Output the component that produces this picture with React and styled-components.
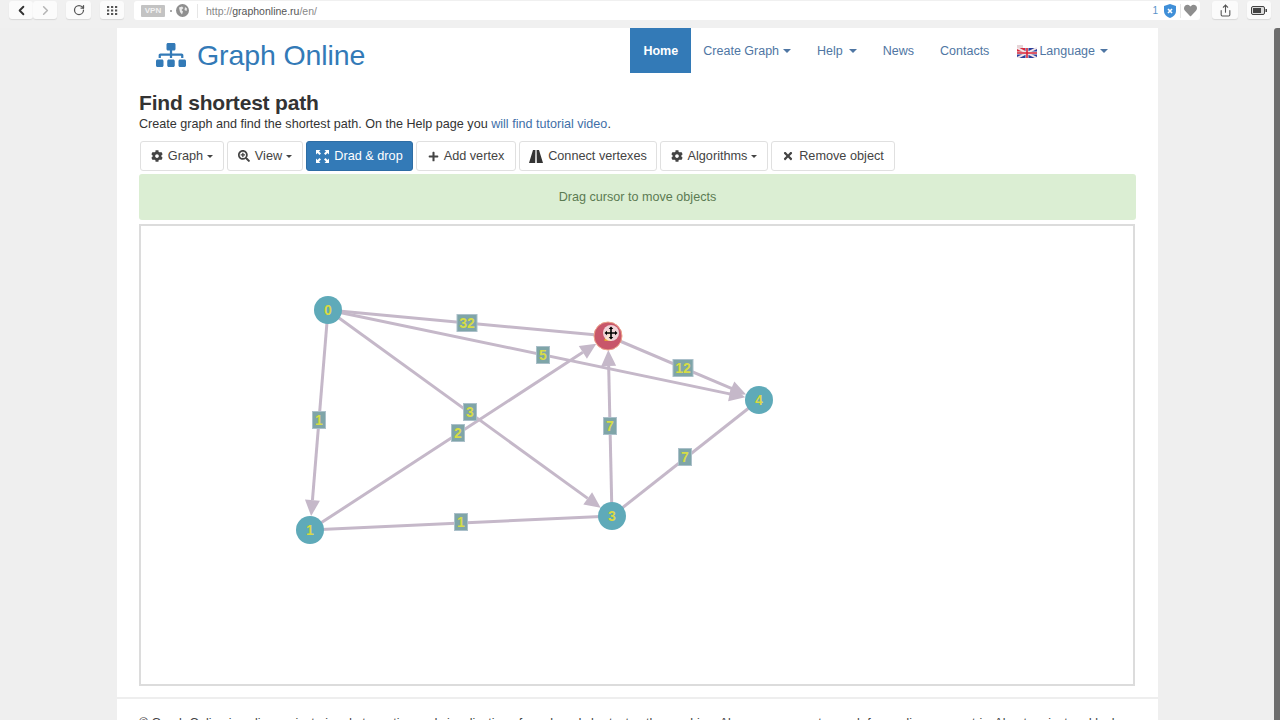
import React from "react";
import styled, { createGlobalStyle } from "styled-components";
import { FaCog, FaSearchPlus, FaPlus, FaTimes, FaSitemap, FaHeart } from "react-icons/fa";
import { ChevronLeft, ChevronRight, RotateCw, Share } from "lucide-react";

const GlobalStyle = createGlobalStyle`
  html, body {
    margin: 0;
    height: 720px;
    overflow: hidden;
    background: #efefef;
    font-family: "Liberation Sans", Arial, sans-serif;
    color: #333;
  }
`;

const BrowserBar = styled.div`
  display: flex;
  align-items: flex-start;
  height: 28px;
  padding: 1px 9px 0;
  box-sizing: border-box;
  background: #f0f0f0;
`;

const ChromeButton = styled.div`
  display: flex;
  align-items: center;
  justify-content: center;
  width: ${(p) => p.$w || 24}px;
  height: 18px;
  margin-right: ${(p) => p.$gap || 0}px;
  background: #fbfbfb;
  border-radius: 3px;
  box-shadow: 0 1px 1px #d8d8d8;
  color: ${(p) => p.$color || "#555"};
`;

const UrlField = styled.div`
  flex: 1;
  display: flex;
  align-items: center;
  height: 19px;
  margin: 0 12px 0 10px;
  padding: 0 3px 0 7px;
  background: #fff;
  border-radius: 3px;
  font-size: 10.5px;
  color: #888;
`;

const VpnBadge = styled.span`
  width: 24px;
  height: 12px;
  background: #c3c3c3;
  color: #f2f2f2;
  border-radius: 1px;
  font-size: 8px;
  font-weight: bold;
  line-height: 12px;
  text-align: center;
`;

const Dot = styled.span`
  width: 2px;
  height: 2px;
  margin: 0 4px 0 5px;
  background: #aaa;
`;

const Separator = styled.span`
  width: 1px;
  height: 14px;
  margin: ${(p) => p.$margin};
  background: #e6e6e6;
`;

const Host = styled.span`
  color: #555;
`;

const BlockCount = styled.span`
  margin-left: auto;
  margin-right: 6px;
  color: #5a93c9;
  font-size: 10px;
`;

const Page = styled.div`
  width: 1041px;
  height: 692px;
  margin-left: 117px;
  background: #fff;
  overflow: hidden;
`;

const Header = styled.header`
  display: flex;
  justify-content: space-between;
  height: 45px;
  padding: 0 37px 0 39px;
`;

const Brand = styled.a`
  display: flex;
  align-items: center;
  gap: 11px;
  height: 54px;
  color: #337ab7;
  font-size: 28.5px;
  letter-spacing: -0.1px;
`;

const Nav = styled.nav`
  display: flex;
`;

const NavItem = styled.a`
  display: flex;
  align-items: center;
  padding: 0 13px 0 ${(p) => p.$left || 13}px;
  height: 45px;
  box-sizing: border-box;
  font-size: 12.5px;
  color: #4f76a3;
`;

const ActiveNavItem = styled(NavItem)`
  justify-content: center;
  width: 61px;
  padding: 0;
  color: #fff;
  background: #337ab7;
  font-weight: bold;
`;

const Caret = styled.span`
  width: 0;
  height: 0;
  margin-left: ${(p) => p.$gap}px;
  border-top: ${(p) => p.$size}px solid currentColor;
  border-left: ${(p) => p.$size}px solid transparent;
  border-right: ${(p) => p.$size}px solid transparent;
`;

const Flag = styled.svg`
  width: 20px;
  height: 13px;
  margin: 2px 2px 0 2px;
`;

const Content = styled.main`
  padding: 0 22px 0 22px;
`;

const Title = styled.h1`
  margin: 18px 0 0;
  font-size: 21px;
  line-height: 24px;
  font-weight: bold;
  letter-spacing: -0.2px;
  color: #333;
`;

const Lead = styled.p`
  margin: 1px 0 0;
  font-size: 12.6px;
  line-height: 16px;
  color: #333;
`;

const LeadLink = styled.a`
  color: #3f6fa8;
`;

const Toolbar = styled.div`
  display: flex;
  gap: 3px;
  margin: 9px 0 3px 1px;
`;

const ToolButton = styled.button`
  display: flex;
  align-items: center;
  justify-content: center;
  gap: 5px;
  width: ${(p) => p.$w}px;
  height: 30px;
  padding: 0;
  box-sizing: border-box;
  font-family: inherit;
  font-size: 12.7px;
  color: ${(p) => (p.$active ? "#fff" : "#444")};
  background: ${(p) => (p.$active ? "#337ab7" : "#fff")};
  border: 1px solid ${(p) => (p.$active ? "#2e6da4" : "#e0e0e0")};
  border-radius: 3px;
  svg {
    flex: none;
  }
`;

const Alert = styled.div`
  display: flex;
  align-items: center;
  justify-content: center;
  height: 46px;
  background: #dbeed3;
  border-radius: 3px;
  font-size: 12.6px;
  color: #5b7b52;
`;

const Canvas = styled.div`
  width: 996px;
  height: 462px;
  margin-top: 4px;
  box-sizing: border-box;
  border: 2px solid #dcdcdc;
`;

const GraphSvg = styled.svg`
  display: block;
  width: 100%;
  height: 100%;
  font-family: "Liberation Sans", Arial, sans-serif;
  font-weight: bold;
  text-anchor: middle;
`;

const Rule = styled.hr`
  height: 2px;
  margin: 11px 0 0;
  border: 0;
  background: #eeeeee;
`;

const Footer = styled.footer`
  padding: 15px 22px 0;
  font-size: 12.4px;
  line-height: 18px;
  white-space: nowrap;
  color: #444;
`;

const Scrollbar = styled.div`
  position: absolute;
  top: 28px;
  right: 0;
  width: 6px;
  height: 692px;
  background: #6d6d6d;
  border-radius: 3px 0 0 0;
`;

const LINE = "#c5b8c9";

const nodes = [
  { id: 0, x: 328, y: 310 },
  { id: 1, x: 310, y: 530 },
  { id: 2, x: 608, y: 336, active: true },
  { id: 3, x: 612, y: 516 },
  { id: 4, x: 759, y: 400 },
];

const edges = [
  { from: 0, to: 2, label: "32", lx: 467, ly: 323 },
  { from: 0, to: 4, label: "5", lx: 543, ly: 355, arrow: true },
  { from: 0, to: 1, label: "1", lx: 319, ly: 420, arrow: true },
  { from: 0, to: 3, label: "3", lx: 470, ly: 412, arrow: true },
  { from: 1, to: 2, label: "2", lx: 458, ly: 433, arrow: true },
  { from: 3, to: 2, label: "7", lx: 610, ly: 426, arrow: true },
  { from: 2, to: 4, label: "12", lx: 683, ly: 368, arrow: true },
  { from: 1, to: 3, label: "1", lx: 461, ly: 522 },
  { from: 3, to: 4, label: "7", lx: 685, ly: 457 },
];

const NODE_R = 14;

function Edge({ edge }) {
  const a = nodes[edge.from];
  const b = nodes[edge.to];
  const len = Math.hypot(b.x - a.x, b.y - a.y);
  const ux = (b.x - a.x) / len;
  const uy = (b.y - a.y) / len;
  const tipX = b.x - ux * NODE_R;
  const tipY = b.y - uy * NODE_R;
  const baseX = tipX - ux * 16;
  const baseY = tipY - uy * 16;
  const head = `${tipX},${tipY} ${baseX - uy * 7.5},${baseY + ux * 7.5} ${baseX + uy * 7.5},${baseY - ux * 7.5}`;
  return (
    <g>
      <line x1={a.x} y1={a.y} x2={edge.arrow ? baseX : b.x} y2={edge.arrow ? baseY : b.y} stroke={LINE} strokeWidth="3" />
      {edge.arrow && <polygon points={head} fill={LINE} />}
    </g>
  );
}

function EdgeLabel({ edge }) {
  const w = edge.label.length > 1 ? 20 : 13;
  return (
    <g>
      <rect x={edge.lx - w / 2} y={edge.ly - 8.5} width={w} height="17" fill="#7fa5a8" stroke="#abc0ca" strokeWidth="1" />
      <text x={edge.lx} y={edge.ly + 5} fontSize="14" fill="#d6dc45">{edge.label}</text>
    </g>
  );
}

function Node({ node }) {
  return (
    <g>
      <circle
        cx={node.x}
        cy={node.y}
        r={NODE_R}
        fill={node.active ? "#c8566a" : "#5faab9"}
        stroke={node.active ? "#eda58a" : "none"}
        strokeWidth="1"
      />
      <text x={node.x} y={node.y + 5} fontSize="14" fill={node.active ? "#eca13a" : "#d9d944"}>{node.id}</text>
    </g>
  );
}

// the move cursor sits on the selected vertex
function MoveCursor({ x, y }) {
  return (
    <g transform={`translate(${x} ${y})`} strokeLinejoin="round">
      <circle r="8" fill="#fff" opacity="0.75" />
      <path
        d="M0-6.5 2.3-4H.8V-.8H4V-2.3L6.5 0 4 2.3V.8H.8V4H2.3L0 6.5-2.3 4H-.8V.8H-4V2.3L-6.5 0-4-2.3V-.8H-.8V-4H-2.3Z"
        fill="#000"
      />
    </g>
  );
}

function FullscreenIcon() {
  return (
    <svg width="13" height="13" viewBox="0 0 13 13" fill="currentColor">
      <path d="M0 0h4.5L3 1.5 5 3.500 3.500 5 1.500 3 0 4.500zM13 0v4.500L11.500 3 9.500 5 8 3.500 10 1.500 8.500 0zM0 13V8.500L1.500 10 3.500 8 5 9.500 3 11.500 4.500 13zM13 13H8.500L10 11.500 8 9.500 9.500 8 11.500 10 13 8.500z" />
    </svg>
  );
}

function RoadIcon() {
  return (
    <svg width="14" height="13" viewBox="0 0 14 13" fill="#333">
      <path d="M4 0H6.400L6.200 13H0ZM7.600 0H10L14 13H7.800Z" />
    </svg>
  );
}

function GridIcon() {
  return (
    <svg width="11" height="9" viewBox="0 0 11 9" fill="#555">
      {[0, 4, 8].map((x) => [0, 3.5, 7].map((y) => <rect key={`${x}-${y}`} x={x} y={y} width="2.200" height="2" />))}
    </svg>
  );
}

function GlobeIcon() {
  return (
    <svg width="13" height="13" viewBox="0 0 13 13">
      <circle cx="6.500" cy="6.500" r="6.500" fill="#8f8f8f" />
      <path d="M3 3.500 6 2.500 7.500 4 5.500 6 7 7.500 6 10.500 4 8zM9 3l2 1.500L10.500 7 8.500 6z" fill="#e9e9e9" />
    </svg>
  );
}

function ShieldIcon() {
  return (
    <svg width="12" height="14" viewBox="0 0 12 14">
      <path d="M6 0 12 2V7C12 10.500 9 13 6 14 3 13 0 10.500 0 7V2Z" fill="#3f8fd8" />
      <path d="M4 5 8 9M8 5 4 9" stroke="#fff" strokeWidth="1.600" />
    </svg>
  );
}

function BatteryIcon() {
  return (
    <svg width="16" height="9" viewBox="0 0 16 9">
      <rect x="0.500" y="0.500" width="13" height="8" rx="1.500" fill="#ddd" stroke="#444" />
      <rect x="2" y="2" width="8" height="5" fill="#444" />
      <rect x="14.500" y="3" width="1.500" height="3" fill="#444" />
    </svg>
  );
}

function UkFlag() {
  return (
    <Flag viewBox="0 0 20 13">
      <rect y="3" width="20" height="10" fill="#2b3f9c" />
      <rect y="3" width="8" height="5" fill="#d8283c" />
      <path d="M0 3 20 13M20 3 0 13" stroke="#f3e6e8" strokeWidth="2" />
      <path d="M10 3V13M0 8H20" stroke="#e8e8e8" strokeWidth="3" />
      <path d="M10 3V13M0 8H20" stroke="#d8243a" strokeWidth="1.600" />
      <rect width="6" height="3" fill="#e6d5d8" />
    </Flag>
  );
}

const toolButtons = [
  { text: "Graph", w: 84, icon: <FaCog size={12} />, caret: true },
  { text: "View", w: 76, icon: <FaSearchPlus size={12} />, caret: true },
  { text: "Drad & drop", w: 107, icon: <FullscreenIcon />, active: true },
  { text: "Add vertex", w: 100, icon: <FaPlus size={11} /> },
  { text: "Connect vertexes", w: 138, icon: <RoadIcon /> },
  { text: "Algorithms", w: 108, icon: <FaCog size={12} />, caret: true },
  { text: "Remove object", w: 124, icon: <FaTimes size={12} /> },
];

export default function App() {
  return (
    <>
      <GlobalStyle />
      <BrowserBar>
        <ChromeButton><ChevronLeft size={15} strokeWidth={3} color="#333" /></ChromeButton>
        <ChromeButton $gap={9} $color="#b5b5b5"><ChevronRight size={15} strokeWidth={2.5} /></ChromeButton>
        <ChromeButton $gap={9} $w={25}><RotateCw size={12} strokeWidth={2.5} /></ChromeButton>
        <ChromeButton><GridIcon /></ChromeButton>
        <UrlField>
          <VpnBadge>VPN</VpnBadge>
          <Dot />
          <GlobeIcon />
          <Separator $margin="0 8px 0 8px" />
          <span>http://<Host>graphonline.ru</Host>/en/</span>
          <BlockCount>1</BlockCount>
          <ShieldIcon />
          <Separator $margin="0 3px 0 4px" />
          <FaHeart size={13} color="#8e8e8e" />
        </UrlField>
        <ChromeButton $w={26} $gap={9}><Share size={13} /></ChromeButton>
        <ChromeButton $w={24}><BatteryIcon /></ChromeButton>
      </BrowserBar>
      <Page>
        <Header>
          <Brand>
            <FaSitemap size={30} />
            Graph Online
          </Brand>
          <Nav>
            <ActiveNavItem>Home</ActiveNavItem>
            <NavItem $left={12}>Create Graph<Caret $gap={4} $size={4} /></NavItem>
            <NavItem>Help<Caret $gap={6} $size={4} /></NavItem>
            <NavItem>News</NavItem>
            <NavItem>Contacts</NavItem>
            <NavItem><UkFlag />Language<Caret $gap={5} $size={4} /></NavItem>
          </Nav>
        </Header>
        <Content>
          <Title>Find shortest path</Title>
          <Lead>
            Create graph and find the shortest path. On the Help page you <LeadLink>will find tutorial video</LeadLink>.
          </Lead>
          <Toolbar>
            {toolButtons.map((b) => (
              <ToolButton key={b.text} $w={b.w} $active={b.active}>
                {b.icon}
                {b.text}
                {b.caret && <Caret $gap={-1} $size={3} />}
              </ToolButton>
            ))}
          </Toolbar>
          <Alert>Drag cursor to move objects</Alert>
          <Canvas>
            <GraphSvg viewBox="141 226 992 458">
              {edges.map((e) => <Edge key={`${e.from}-${e.to}`} edge={e} />)}
              {edges.map((e) => <EdgeLabel key={`${e.from}-${e.to}`} edge={e} />)}
              {nodes.map((n) => <Node key={n.id} node={n} />)}
              <MoveCursor x={611} y={333} />
            </GraphSvg>
          </Canvas>
        </Content>
        <Rule />
        <Footer>
          © Graph Online is online project aimed at creation and visualization of graph and shortest path searching. Also you can create graph from adjacency matrix. About project and look
        </Footer>
      </Page>
      <Scrollbar />
    </>
  );
}
